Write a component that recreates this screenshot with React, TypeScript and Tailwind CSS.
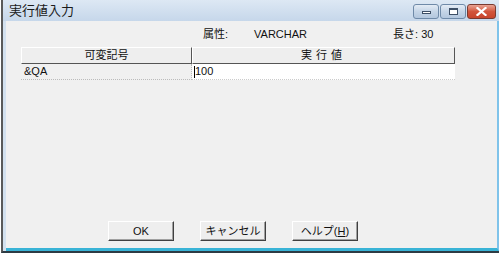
import React from "react";

const font = { fontFamily: '"Liberation Sans", "Noto Sans CJK JP", sans-serif' };

const WinButton = ({ children, w }: { children: React.ReactNode; w: string }) => (
  <button
    className={`${w} h-[20px] bg-[#eeeeee] text-[11px] text-[#111] border border-t-[#ffffff] border-l-[#ffffff] border-r-[#404040] border-b-[#404040] shadow-[inset_-1px_-1px_0_#a0a0a0] flex items-center justify-center`}
  >
    {children}
  </button>
);

const CaptionButton = ({ kind }: { kind: "min" | "max" | "close" }) => {
  if (kind === "close") {
    return (
      <div className="w-[29px] h-[15px] rounded-[3px] border border-[#7a3a30] bg-gradient-to-b from-[#e8a494] via-[#d2553c] to-[#c8452c] flex items-center justify-center">
        <svg width="11" height="9" viewBox="0 0 11 9">
          <path d="M1.5 1 L9.5 8 M9.5 1 L1.5 8" stroke="#fff" strokeWidth="2.2" strokeLinecap="square" />
        </svg>
      </div>
    );
  }
  return (
    <div className="w-[26px] h-[15px] rounded-[3px] border border-[#6f8aa8] bg-gradient-to-b from-[#e4ecf5] via-[#c5d5e7] to-[#b3c7de] flex items-center justify-center">
      {kind === "min" ? (
        <div className="w-[9px] h-[3px] mt-[3px] bg-white border border-[#3d4f66]" />
      ) : (
        <div className="w-[9px] h-[7px] bg-white border border-[#3d4f66] border-t-2" />
      )}
    </div>
  );
};

export default function App() {
  return (
    <div className="w-[503px] h-[255px] bg-white pl-[1px]" style={font}>
      <div className="w-[498px] h-[253px] border-l-2 border-l-[#5a5a5a] border-b-2 border-b-[#2d3b44] flex flex-col bg-[#d3e1ef]">
        {/* title bar */}
        <div className="h-[21px] flex items-center justify-between pl-[6px] pr-[3px] bg-gradient-to-b from-[#dde8f4] to-[#c6d7ea]">
          <span className="text-[13px] text-[#1a1a1a] leading-none">実行値入力</span>
          <div className="flex gap-[1px] mt-[1px]">
            <CaptionButton kind="min" />
            <CaptionButton kind="max" />
            <CaptionButton kind="close" />
          </div>
        </div>

        {/* client area */}
        <div className="flex-1 ml-[3px] border-b-[3px] border-b-[#39b3d6] border-r-2 border-r-[#7fc3ea] bg-[#f0f0f0] flex flex-col">
          <div className="h-[26px] flex items-center text-[11px] text-[#111]">
            <span className="ml-[197px]">属性:</span>
            <span className="ml-[26px]">VARCHAR</span>
            <span className="ml-[86px]">長さ: 30</span>
          </div>

          <div className="ml-[15px] w-[434px] flex flex-col">
            <div className="flex h-[17px] text-[11px] text-[#111]">
              <div className="w-[171px] border border-t-[#fff] border-l-[#fff] border-r-[#555] border-b-[#555] bg-[#eeeeee] flex items-center justify-center">
                可変記号
              </div>
              <div className="flex-1 border border-t-[#fff] border-l-[#fff] border-r-[#555] border-b-[#555] bg-[#eeeeee] flex items-center justify-center tracking-[4px]">
                実行値
              </div>
            </div>
            <div className="flex h-[16px] text-[11px] text-[#111]">
              <div className="w-[171px] border-r border-b border-dotted border-[#bbb] flex items-center pl-[3px]">
                &amp;QA
              </div>
              <div className="flex-1 bg-white border-b border-dotted border-[#ccc] flex items-center pl-[2px]">
                <span className="w-px h-[12px] bg-black" />
                <span>100</span>
              </div>
            </div>
          </div>

          <div className="flex-1" />

          <div className="flex ml-[102px] gap-[26px] mb-[7px]">
            <WinButton w="w-[66px]">OK</WinButton>
            <WinButton w="w-[66px]">キャンセル</WinButton>
            <WinButton w="w-[66px]">ヘルプ(<span className="underline">H</span>)</WinButton>
          </div>
        </div>
      </div>
    </div>
  );
}
